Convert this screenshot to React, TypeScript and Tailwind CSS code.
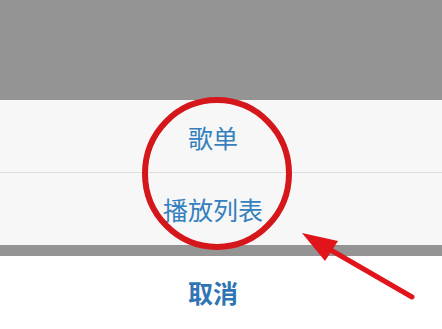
export default function App() {
  const font = { fontFamily: '"Noto Sans CJK SC", "Noto Sans", sans-serif' };
  return (
    <div className="relative w-[442px] h-[329px] overflow-hidden bg-[#949494]" style={font}>
      <div className="h-[100px]" />
      <div className="bg-[#f7f7f7]">
        <div className="h-[73px] flex items-center justify-center pr-[16px] border-b border-[#dddddd]">
          <span className="text-[25px] leading-none text-[#3580be] pt-[3px]">歌单</span>
        </div>
        <div className="h-[72px] flex items-center justify-center pr-[16px]">
          <span className="text-[25px] leading-none text-[#3580be] pt-[1px]">播放列表</span>
        </div>
      </div>
      <div className="h-[11px]" />
      <div className="h-[73px] bg-white flex items-center justify-center pr-[16px]">
        <span className="text-[25px] leading-none font-bold text-[#2f74b4] pb-[1px]">取消</span>
      </div>
      <svg className="absolute inset-0 pointer-events-none" width="442" height="329" viewBox="0 0 442 329">
        <ellipse cx="217" cy="173.5" rx="72" ry="73.5" fill="none" stroke="#d5161b" strokeWidth="6" />
        <line x1="412" y1="297" x2="322" y2="245" stroke="#e0141a" strokeWidth="5" strokeLinecap="round" />
        <polygon points="302,233 338,241 325,261" fill="#e0141a" />
      </svg>
    </div>
  );
}
